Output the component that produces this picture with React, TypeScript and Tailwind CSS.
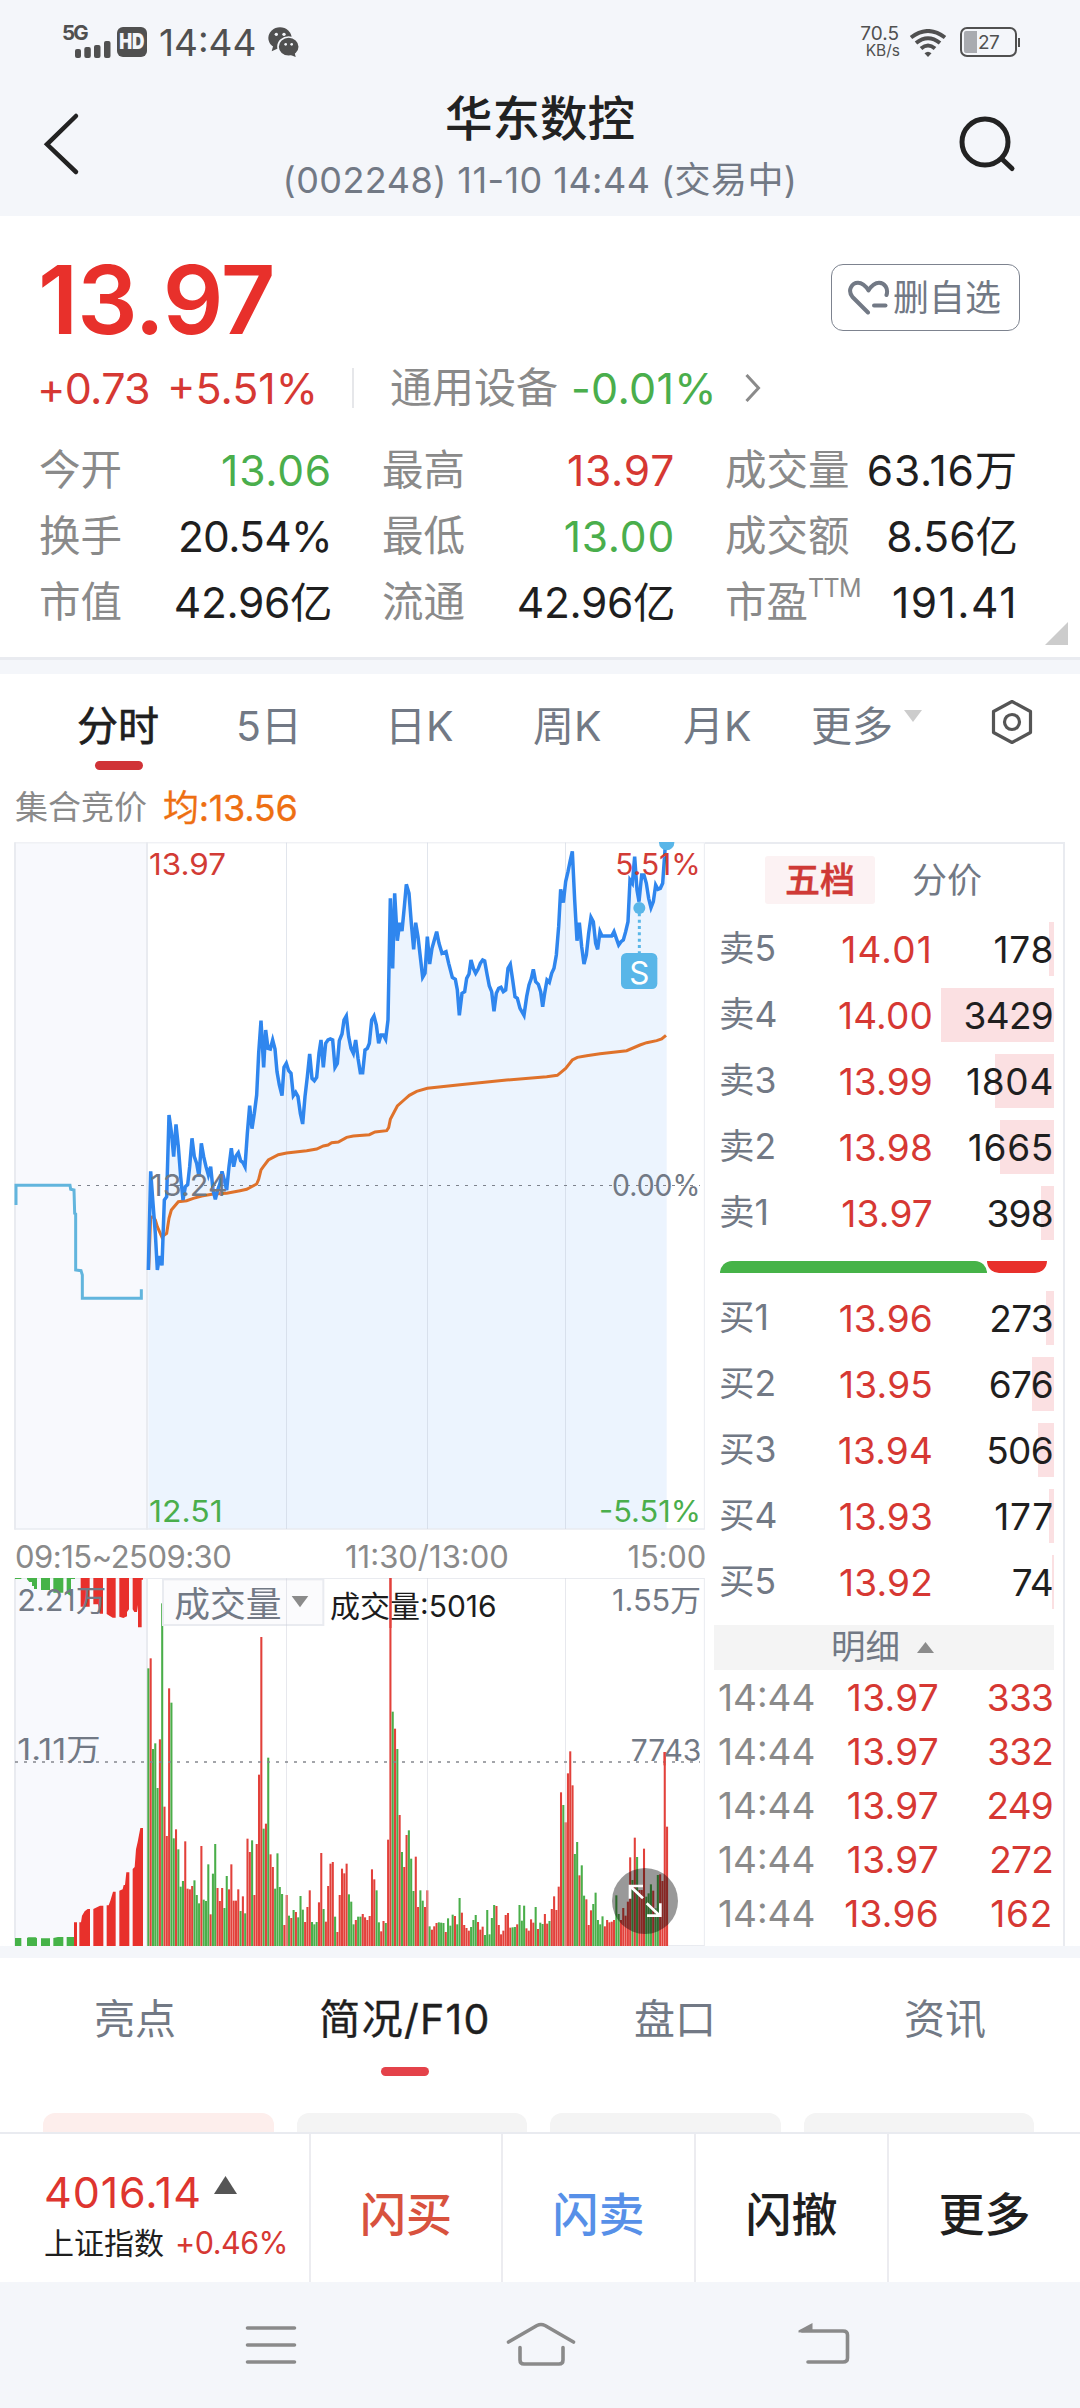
import React from "react";

// Plot coordinates below are in thirds of a CSS pixel.
const PRICE =
  "445,1320 452,1024 459,1120 466,1210 472,1320 479,1278 486,1306 493,1110 500,1100 507,855 514,905 521,980 528,883 535,950 542,1040 549,1110 556,1070 563,1064 569,1010 576,925 583,980 590,1000 597,1040 604,940 611,980 618,1010 625,1035 632,1010 639,1080 646,1108 653,1080 660,1060 666,1024 673,1050 680,1080 687,1010 694,955 701,1010 708,978 715,968 722,992 729,998 735,1010 742,910 749,827 756,896 763,850 770,795 776,670 783,572 791,712 797,600 804,655 811,657 818,630 825,657 831,725 838,765 846,797 852,712 859,700 866,722 873,730 880,797 887,787 894,800 901,850 908,882 915,800 922,740 929,672 936,745 943,752 950,742 957,670 963,630 970,712 977,640 984,630 991,627 998,630 1005,712 1012,700 1018,632 1026,612 1032,570 1039,558 1046,620 1053,655 1060,670 1067,630 1074,685 1081,728 1088,728 1095,660 1102,655 1108,640 1115,570 1122,558 1129,585 1136,640 1143,615 1150,615 1157,628 1164,570 1171,205 1178,415 1184,190 1192,332 1199,278 1206,303 1213,230 1219,163 1227,190 1234,280 1241,358 1247,278 1254,320 1262,390 1268,442 1275,430 1282,320 1289,402 1296,355 1303,330 1310,305 1317,340 1326,370 1338,365 1346,400 1357,442 1366,448 1372,480 1378,556 1386,490 1394,485 1400,445 1407,432 1413,390 1420,415 1427,430 1434,418 1441,400 1448,390 1454,393 1461,432 1468,468 1475,485 1482,544 1489,490 1496,475 1503,472 1510,485 1517,480 1524,415 1531,403 1538,450 1545,500 1552,505 1560,535 1572,556 1580,500 1587,465 1594,445 1600,418 1607,455 1615,463 1622,485 1628,530 1634,490 1641,450 1648,457 1655,430 1662,415 1669,375 1676,290 1682,178 1690,218 1697,155 1704,125 1711,90 1717,64 1724,210 1731,332 1738,278 1745,350 1752,402 1759,375 1766,310 1773,262 1780,275 1787,340 1793,358 1800,305 1806,318 1835,318 1842,305 1849,325 1856,345 1863,335 1870,330 1877,305 1884,275 1890,150 1897,160 1904,80 1911,180 1917,215 1925,135 1932,135 1939,160 1946,205 1953,233 1960,215 1967,165 1974,178 1981,175 1988,160 1995,60 2000,38";

const AVERAGE =
  "446,1320 452,1162 459,1160 466,1170 472,1190 486,1222 493,1215 500,1210 507,1165 514,1140 535,1115 560,1112 580,1105 605,1098 640,1092 680,1090 720,1082 740,1078 770,1062 776,1048 783,1020 790,1010 805,990 835,974 860,969 920,962 950,957 970,948 984,945 995,938 1015,936 1040,922 1060,918 1108,914 1125,906 1160,902 1166,893 1171,868 1192,828 1212,810 1228,796 1250,784 1282,775 1380,764 1520,750 1640,740 1672,736 1697,715 1717,690 1732,682 1760,677 1800,671 1880,662 1920,645 1940,638 1970,632 1985,627 1998,616";

const AUCTION =
  "48,1125 48,1066 210,1066 212,1078 222,1080 224,1150 227,1152 227,1320 243,1322 247,1335 247,1405 424,1405 424,1378";

// One entry per minute: r = up, g = down, followed by the top of the bar.
const VOLUME =
  "g565 r535 g807 g790 g924 r778 g370 r980 r1068 r625 g668 g1075 r1048 g1108 g1220 g1203 r1084 r1226 r1228 r1218 g1201 g1245 g1270 r1098 g1259 g1263 g1153 r1303 g1181 g1092 r1224 r1263 r1224 g1284 g1188 r1228 r1153 r1262 r1262 r1228 g1293 r1249 g1300 r1076 r1116 g1081 r1245 r1092 r884 r471 g1046 r1031 g833 r1123 r1161 g1226 g1120 g1221 g1242 r1335 r1245 g1307 r1314 g1290 r1296 g1312 g1248 g1289 r1326 r1281 r1231 g1326 g1333 g1326 r1267 r1119 g1287 r1325 r1218 r1151 r1146 g1310 r1356 r1245 r1166 r1180 r1151 g1243 g1265 g1333 r1320 g1310 g1310 r1302 r1312 r1320 r1308 r1168 r1198 g1231 g1327 r1354 r1323 g1329 r1079 r294 g695 r746 g807 r1005 g1116 r1161 r1065 g1051 g1136 g1233 r1130 r1281 g1231 g1262 r1281 r1231 g1339 r1349 r1339 r1329 g1327 g1328 g1329 r1356 g1315 g1337 g1304 r1308 g1333 g1254 r1298 r1335 r1344 r1352 g1341 g1320 g1305 r1326 r1349 r1340 g1365 g1290 g1363 g1314 g1275 r1278 r1335 r1363 r1352 r1305 r1299 r1343 g1342 g1341 r1333 g1275 g1322 g1277 r1345 r1352 r1318 r1328 g1281 r1347 g1328 g1332 r1302 r1331 g1323 r1287 r1249 r1290 r1220 r937 g975 r1027 r880 r814 r916 g1122 g1086 r1186 g1156 g1247 r1258 r1335 r1291 g1272 g1238 g1320 g1333 g1309 r1339 r1320 r1327 r1325 r1320 g1246 g1302 r1320 r1284 r1307 r1265 r1132 g1200 r1073 g1131 r1230 r1230 r1106 g1250 g1240 g1213 r1232 g1285 g1185 r1183 r1203 r816 r1040".split(" ");

const LINE = "#e9ebf0";
const GREEN = "#46b348";
const RED = "#e8302b";

type LabelProps = {
  x: number;
  y: number;
  w: number;
  size?: number;
  fill: string;
  children: string;
};

function Label({ x, y, w, size = 88, fill, children }: LabelProps) {
  return (
    <text x={x} y={y} fontSize={size} fill={fill} textLength={w} lengthAdjust="spacingAndGlyphs">
      {children}
    </text>
  );
}

function PriceChart() {
  return (
    <svg className="block h-[688px] w-[708px]" viewBox="0 36 2124 2064">
      <rect x="45" y="38" width="396" height="2059" fill="#f8f9fd" />
      <polygon points={`445,2097 ${PRICE} 2000,2097`} fill="#ecf4fe" />
      <g stroke={LINE} fill="none">
        <path d="M45 38.500H2113" strokeWidth="3" />
        <path d="M45 2097H2113" strokeWidth="5" />
        <path d="M45 37V2099M441 37V2099" strokeWidth="6" />
        <path d="M2113 37V2099" strokeWidth="3" />
      </g>
      <path d="M859.500 38V2097M1282.500 38V2097M1696.500 38V2097" stroke="#c9d0dc" strokeOpacity="0.55" strokeWidth="3" />
      <path d="M234 1066.500H2100" stroke="#7d828c" strokeWidth="3" strokeDasharray="9 18" />
      <Label x={1836} y={1098} w={265} fill="#727985">0.00%</Label>
      <polyline points={AUCTION} fill="none" stroke="#62b5dd" strokeWidth="9" />
      <polyline points={AVERAGE} fill="none" stroke="#df722b" strokeWidth="9" />
      <polyline points={PRICE} fill="none" stroke="#2f86ee" strokeWidth="10.500" />
      <Label x={451} y={1098} w={232} fill="#727985">13.24</Label>
      <circle cx="2000" cy="38" r="23" fill="#59b6e8" />
      <Label x={447} y={135} w={231} fill="#d23b35">13.97</Label>
      <Label x={1846} y={135} w={256} fill="#d23b35">5.51%</Label>
      <Label x={447} y={2076} w={221} fill="#4aae4c">12.51</Label>
      <Label x={1797} y={2076} w={306} fill="#4aae4c">-5.51%</Label>
      <path d="M1918 250V370" stroke="#59b6e8" strokeWidth="9" strokeDasharray="9 10" />
      <circle cx="1918" cy="234" r="18" fill="#59b6e8" />
      <rect x="1863" y="369" width="109" height="108" rx="16" fill="#59b6e8" />
      <text x="1918" y="462" fontSize="94" fill="#fff" textAnchor="middle">S</text>
    </svg>
  );
}

function VolumeChart() {
  return (
    <svg className="block h-[368px] w-[708px]" viewBox="0 294 2124 1104">
      <rect x="45" y="294" width="396" height="1104" fill="#f8f9fd" />
      <g stroke={LINE} fill="none">
        <path d="M45 295.500H2113M2113 294V1398M1999 1396.500H2113" strokeWidth="3" />
        <path d="M45 294V1398M441 294V1398" strokeWidth="6" />
      </g>
      <path
        fill={GREEN}
        d="M45 294h19v3h-19zM81 294h30v33h-9v-9h-6v-12h-8l-7-8zM123 294h27v36h-27zM160 294h30v44h-30zM200 294h25v3h-12v52l-13-9zM45 1374h19v24h-19zM81 1374l4-2h22l4 3v23h-30zM123 1375h27v23h-27zM160 1374l14-3h16v27h-30zM200 1371h22v27h-22z"
      />
      <path
        fill={RED}
        d="M242 294h27v86h-27zM280 294h29v107h-10l-5-28h-14zM320 294h27v119h-9l-18-11zM358 294h29v94l-6 8v13l-11 5l-12-4zM398 294h31v5h-4v143h-11v-67l-3 21h-8l-5-8zM222 1327h9v71h-9zM238 1327h5l3-20 8-13 9-7h7v111h-32zM280 1287l20-10h10v121h-30zM320 1276h6l5-14 8-27h8v163h-27zM358 1232l10-4 3-13h4l4-38h9v221h-30zM398 1167l6-6 4-53 5-22 8-42h8v354h-31z"
      />
      {VOLUME.map((bar, i) => {
        const top = Number(bar.slice(1));
        return (
          <rect
            key={i}
            x={442 + i * 6.916}
            y={top}
            width="6.200"
            height={1398 - top}
            fill={bar[0] === "r" ? "#e2413b" : "#4aae4a"}
          />
        );
      })}
      <rect x="489" y="298" width="481" height="137" fill="#fbfbfd" stroke={LINE} strokeWidth="6" />
      <path d="M859.500 295V1398M1282.500 295V1398M1696.500 295V1398" stroke="#c9cdd6" strokeOpacity="0.45" strokeWidth="3" />
      <path d="M45 846H2100" stroke="#85888e" strokeWidth="5" strokeDasharray="9 18" />
      <Label x={523} y={411} w={322} size={106} fill="#727985">成交量</Label>
      <path d="M875 348h50l-25 34z" fill="#8b8b8b" />
      <Label x={990} y={410} w={500} size={90} fill="#1c1c1c">成交量:5016</Label>
      <rect x="1168.500" y="294" width="6" height="150" fill="#e2413b" />
      <Label x={52} y={393} w={267} fill="#727985">2.21万</Label>
      <Label x={52} y={840} w={250} fill="#727985">1.11万</Label>
      <Label x={1836} y={394} w={267} fill="#727985">1.55万</Label>
      <Label x={1892} y={842} w={212} fill="#727985">7743</Label>
      <rect x="1990.500" y="816" width="6" height="40" fill="#e2413b" />
      <circle cx="1935" cy="1263" r="99" fill="#000" fillOpacity="0.4" />
      <path
        d="M1929 1255L1893 1221M1890 1256V1218H1929M1940 1270L1978 1306M1981 1270V1307H1941"
        fill="none"
        stroke="#fff"
        strokeWidth="8"
      />
    </svg>
  );
}

function StatusBar() {
  return (
    <div className="flex h-[84px] items-center pr-[60px] pl-[62px] text-[#505050]">
      <div className="flex h-[32px] w-[49px] flex-col">
        <span className="h-[14px] text-[20.500px] leading-[14px] font-bold tracking-[-1.800px]">5G</span>
        <svg className="mt-[1px] ml-[13px] h-[17px] w-[36px]" viewBox="0 0 36 17" fill="currentColor">
          <rect x="0" y="8" width="6" height="9" rx="2" />
          <rect x="9.300" y="6" width="6.500" height="11" rx="2" />
          <rect x="19" y="4" width="6.500" height="13" rx="2" />
          <rect x="29" y="0" width="6.500" height="17" rx="2" />
        </svg>
      </div>
      <div className="ml-[6px] flex h-[30px] w-[30px] items-center justify-center rounded-[6px] bg-[#505050]">
        <span className="scale-x-[0.800] text-[21.500px] leading-none font-black text-[#f4f6fa]">HD</span>
      </div>
      <span className="ml-[12px] w-[98px] text-[37px] leading-none">14:44</span>
      <svg className="ml-[11px] h-[30px] w-[31px]" viewBox="686 50 93 90" fill="currentColor">
        <ellipse cx="722" cy="83" rx="35" ry="32" />
        <path d="M702 105l-5 18 22-10z" />
        <ellipse cx="748" cy="109" rx="32" ry="29" stroke="#f4f6fa" strokeWidth="5" />
        <path d="M752 133l17 7-4-17z" />
        <g fill="#f4f6fa">
          <circle cx="711" cy="72" r="5" />
          <circle cx="734" cy="72" r="5" />
          <circle cx="739" cy="102" r="4" />
          <circle cx="757" cy="102" r="4" />
        </g>
      </svg>
      <div className="ml-auto flex w-[42px] flex-col items-end">
        <span className="mr-[1px] text-[19px] leading-[18px]">70.5</span>
        <span className="text-[15.500px] leading-[16px]">KB/s</span>
      </div>
      <svg className="mt-[2px] ml-[9px] h-[28px] w-[38px]" viewBox="0 0 38 28" fill="none" stroke="currentColor" strokeWidth="4">
        <path d="M2 8.500Q19 -4.500 36 8.500" />
        <path d="M7 14Q19 4.500 31 14" />
        <path d="M12 19.500Q19 13.500 26 19.500" />
        <path d="M15.500 24.300Q19 21 22.500 24.300L19 28z" fill="currentColor" stroke="none" />
      </svg>
      <div className="ml-[13px] flex h-[30px] w-[57px] items-center rounded-[7px] border-[2.500px] border-[#505050] p-[2px]">
        <div className="h-[22px] w-[13px] rounded-l-[2px] bg-[#a9abb0]" />
        <span className="ml-[1px] text-[19px] leading-none tracking-[-0.500px]">27</span>
      </div>
      <div className="ml-[1px] h-[9px] w-[2px] bg-[#505050]" />
    </div>
  );
}

function Header() {
  return (
    <div className="flex h-[132px] justify-between pr-[60px] pl-[40px] text-[#222]">
      <svg className="mt-[24px] h-[72px] w-[50px]" viewBox="40 108 50 72" fill="none" stroke="currentColor" strokeWidth="4.500" strokeLinecap="round">
        <path d="M76 116L47 144.300L76 172" />
      </svg>
      <div className="flex w-[560px] flex-col items-center pl-[32px]">
        <div className="flex h-[70px] items-center text-[47.500px] leading-none font-medium">华东数控</div>
        <div className="flex h-[52px] items-center text-[36px] leading-none tracking-[0.450px] whitespace-nowrap text-[#727985]">
          (002248) 11-10 14:44 (交易中)
        </div>
      </div>
      <svg className="mt-[28px] h-[66px] w-[62px]" viewBox="958 112 62 66" fill="none" stroke="currentColor" strokeWidth="5" strokeLinecap="round">
        <circle cx="985" cy="142" r="23" />
        <path d="M1002 159L1012 168.500" />
      </svg>
    </div>
  );
}

type Stat = { label: string; sup?: string; value: string; tone: string };

const STATS: Stat[] = [
  { label: "今开", value: "13.06", tone: "tracking-[0.800px] text-[#4aae4c]" },
  { label: "最高", value: "13.97", tone: "tracking-[0.800px] text-[#d63833]" },
  { label: "成交量", value: "63.16万", tone: "tracking-[0.800px] text-[#1f1f1f]" },
  { label: "换手", value: "20.54%", tone: "tracking-[-0.700px] text-[#1f1f1f]" },
  { label: "最低", value: "13.00", tone: "tracking-[0.800px] text-[#4aae4c]" },
  { label: "成交额", value: "8.56亿", tone: "tracking-[0px] text-[#1f1f1f]" },
  { label: "市值", value: "42.96亿", tone: "tracking-[-0.400px] text-[#1f1f1f]" },
  { label: "流通", value: "42.96亿", tone: "tracking-[-0.400px] text-[#1f1f1f]" },
  { label: "市盈", sup: "TTM", value: "191.41", tone: "tracking-[1.500px] text-[#1f1f1f]" },
];

function Quote() {
  return (
    <section className="relative h-[441px] bg-white pt-[48px]">
      <div className="flex h-[70px] items-center justify-between pr-[60px] pl-[38px]">
        <span className="text-[95px] leading-none font-semibold tracking-[-1px] text-[#e8302b]">13.97</span>
        <div className="flex h-[67px] w-[189px] items-center self-start rounded-[12px] border-[1.500px] border-[#7d838f] pl-[16px] text-[#727985]">
          <svg className="h-[36px] w-[42px]" viewBox="0 0 42 36" fill="none" stroke="currentColor" strokeWidth="4" strokeLinecap="round" strokeLinejoin="round">
            <path d="M20 32.500L4.500 17C-1 10 4 2.800 10 2.800C15 2.800 18 6.500 20.500 10.500C23 6.500 26 2.800 31 2.800C37 2.800 40.500 9 38.500 15" />
            <path d="M26 25.500H37.500" />
          </svg>
          <span className="ml-[3px] text-[36px] leading-none">删自选</span>
        </div>
      </div>
      <div className="mt-[27px] flex h-[54px] items-center pl-[37px] text-[43px] leading-none tracking-[-0.700px]">
        <span className="w-[130px] text-[#d63833]">+0.73</span>
        <span className="w-[185px] tracking-[0px] text-[#d63833]">+5.51%</span>
        <span className="h-[40px] w-[2px] bg-[#e6e7ea]" />
        <span className="ml-[36px] w-[181px] text-[42px] tracking-normal text-[#8a8a8a]">通用设备</span>
        <span className="w-[174px] tracking-[0.300px] text-[#4aae4c]">-0.01%</span>
        <svg className="h-[28px] w-[16px]" viewBox="0 0 16 28" fill="none" stroke="#8a8a8a" strokeWidth="3">
          <path d="M1.500 1L13.500 14L1.500 27" />
        </svg>
      </div>
      <div className="mt-[23px] grid grid-cols-[293px_293px_293px] gap-x-[50px] pl-[39px]">
        {STATS.map((s) => (
          <div key={s.label} className="flex h-[66px] items-center justify-between leading-none whitespace-nowrap">
            <span className="flex text-[41.500px] text-[#8a8a8a]">
              {s.label}
              {s.sup && <span className="mt-[-6px] text-[25px] leading-none tracking-[-0.700px]">{s.sup}</span>}
            </span>
            <span className={`text-[42.500px] ${s.tone}`}>{s.value}</span>
          </div>
        ))}
      </div>
      <svg className="absolute right-[12px] bottom-[12px] h-[23px] w-[23px]" viewBox="0 0 23 23">
        <path d="M23 0V23H0z" fill="#ccc" />
      </svg>
    </section>
  );
}

function ChartTabs() {
  return (
    <div className="flex h-[104px] items-center pl-[77px] text-[41px] leading-none whitespace-nowrap text-[#727985]">
      <span className="relative flex h-full w-[81px] items-center text-[#1f1f1f] [-webkit-text-stroke:0.700px_#1f1f1f]">
        分时
        <span className="absolute bottom-[8px] left-[18px] h-[9px] w-[48px] rounded-full bg-[#d03337]" />
      </span>
      <span className="ml-[78px] w-[64px]">5日</span>
      <span className="ml-[85px] w-[66px]">日K</span>
      <span className="ml-[82px] w-[68px]">周K</span>
      <span className="ml-[82px] w-[67px]">月K</span>
      <span className="ml-[61px] w-[80px]">更多</span>
      <svg className="mt-[-20px] ml-[13px] h-[12px] w-[18px]" viewBox="0 0 18 12">
        <path d="M0 0H18L9 12z" fill="#ccc" />
      </svg>
      <svg className="mt-[-8px] ml-[69px] h-[46px] w-[42px]" viewBox="0 0 42 46" fill="none" stroke="#555" strokeWidth="3.200" strokeLinejoin="round">
        <path d="M21 2.500L39.500 12.500V33.500L21 43.500L2.500 33.500V12.500z" />
        <circle cx="21" cy="23" r="7.500" />
      </svg>
    </div>
  );
}

type Level = { name: string; price: string; qty: string; bar: string; wide?: boolean; wideQty?: boolean };

const ASKS: Level[] = [
  { name: "卖5", price: "14.01", qty: "178", bar: "w-[5px]", wide: true, wideQty: true },
  { name: "卖4", price: "14.00", qty: "3429", bar: "w-[113px]" },
  { name: "卖3", price: "13.99", qty: "1804", bar: "w-[59px]", wideQty: true },
  { name: "卖2", price: "13.98", qty: "1665", bar: "w-[54px]", wideQty: true },
  { name: "卖1", price: "13.97", qty: "398", bar: "w-[13px]" },
];

const BIDS: Level[] = [
  { name: "买1", price: "13.96", qty: "273", bar: "w-[8px]" },
  { name: "买2", price: "13.95", qty: "676", bar: "w-[22px]" },
  { name: "买3", price: "13.94", qty: "506", bar: "w-[16px]" },
  { name: "买4", price: "13.93", qty: "177", bar: "w-[5px]", wideQty: true },
  { name: "买5", price: "13.92", qty: "74", bar: "w-[2px]" },
];

const TRADES = [
  ["14:44", "13.97", "333"],
  ["14:44", "13.97", "332"],
  ["14:44", "13.97", "249"],
  ["14:44", "13.97", "272"],
  ["14:44", "13.96", "162"],
];

function LevelRow({ name, price, qty, bar, wide, wideQty }: Level) {
  return (
    <div className="flex h-[66px] items-center pr-[9px] pl-[14px] text-[37px] leading-none">
      <span className="w-[90px] text-[35.500px] text-[#727985]">{name}</span>
      <span className={`w-[124px] text-right text-[#d63833] ${wide ? "tracking-[1.200px]" : "tracking-[0.200px]"}`}>{price}</span>
      <span className="relative ml-auto flex h-[54px] w-[114px] items-center justify-end">
        <span className={`absolute top-0 right-0 h-[54px] bg-[#fbe0e2] ${bar}`} />
        <span className={`relative text-[#1f1f1f] ${wideQty ? "tracking-[0.700px]" : "mr-[1px] tracking-[-0.700px]"}`}>{qty}</span>
      </span>
    </div>
  );
}

function OrderBook() {
  return (
    <div className="ml-[-3px] h-[1104px] w-[360px] border-t-2 border-r-2 border-[#e9ebf0] pt-[12px]">
      <div className="flex h-[48px] items-center pl-[60px] text-[35px] leading-none">
        <span className="flex h-[48px] w-[110px] items-center justify-center rounded-[3px] bg-[#fcf2f3] font-medium text-[#cf3a36] [-webkit-text-stroke:0.500px_#cf3a36]">五档</span>
        <span className="ml-[37px] text-[#727985]">分价</span>
      </div>
      <div className="mt-[12px]">
        {ASKS.map((l) => (
          <LevelRow key={l.name} {...l} />
        ))}
      </div>
      <div className="mt-[15px] flex h-[12px] pl-[15px]">
        <div className="w-[267px] rounded-t-[12px] bg-[#46b348]" />
        <div className="w-[60px] rounded-b-[12px] bg-[#e8302b]" />
      </div>
      <div className="mt-[12px]">
        {BIDS.map((l) => (
          <LevelRow key={l.name} {...l} />
        ))}
      </div>
      <div className="mt-[10px] ml-[9px] flex h-[45px] w-[340px] items-center bg-[#f4f4f4] pl-[117px] text-[34.500px] leading-none text-[#727985]">
        明细
        <svg className="ml-[17px] h-[11px] w-[17px]" viewBox="0 0 17 11">
          <path d="M0 11L8.500 0L17 11z" fill="#8b8b8b" />
        </svg>
      </div>
      {TRADES.map(([time, price, qty], i) => (
        <div key={i} className="flex h-[54px] items-center pr-[10px] pl-[13px] text-[37px] leading-none text-[#d63833]">
          <span className="w-[100px] text-[#8a8a8a]">{time}</span>
          <span className="w-[121px] text-right tracking-[0.300px]">{price}</span>
          <span className={qty.startsWith("1") ? "ml-auto tracking-[0.700px]" : "ml-auto tracking-[-0.800px]"}>{qty}</span>
        </div>
      ))}
    </div>
  );
}

function ChartSection() {
  return (
    <section className="bg-white">
      <ChartTabs />
      <div className="flex h-[64px] items-center pb-[5px] pl-[15px] leading-none">
        <span className="w-[148px] text-[33px] text-[#8a8a8a]">集合竞价</span>
        <span className="text-[36px] tracking-[-0.300px] text-[#ee6f12] [-webkit-text-stroke:0.300px_#ee6f12]">均:13.56</span>
      </div>
      <div className="flex">
        <div className="w-[708px]">
          <PriceChart />
          <div className="flex h-[48px] items-center pt-[4px] pr-[2px] pl-[15px] text-[31px] leading-none text-[#8a8a8a]">
            <span className="w-[330px] tracking-[-0.500px]">09:15~2509:30</span>
            <span>11:30/13:00</span>
            <span className="ml-auto tracking-[-0.200px]">15:00</span>
          </div>
          <VolumeChart />
        </div>
        <OrderBook />
      </div>
    </section>
  );
}

function InfoTabs() {
  return (
    <section className="bg-white">
      <div className="grid h-[122px] grid-cols-4 text-[41px] leading-none text-[#727985]">
        <span className="flex items-center justify-center">亮点</span>
        <span className="relative flex items-center justify-center tracking-[1.300px] text-[#1f1f1f] [-webkit-text-stroke:0.400px_#1f1f1f]">
          简况/F10
          <span className="absolute bottom-[4px] left-[111px] h-[9px] w-[48px] rounded-full bg-[#e4424a]" />
        </span>
        <span className="flex items-center justify-center">盘口</span>
        <span className="flex items-center justify-center">资讯</span>
      </div>
      <div className="mt-[33px] grid h-[19px] grid-cols-4 gap-x-[23px] pr-[46px] pl-[43px]">
        <div className="rounded-t-[12px] bg-[#fdeeec]" />
        <div className="rounded-t-[12px] bg-[#f4f4f4]" />
        <div className="rounded-t-[12px] bg-[#f4f4f4]" />
        <div className="rounded-t-[12px] bg-[#f4f4f4]" />
      </div>
    </section>
  );
}

function ActionBar() {
  return (
    <div className="flex h-[150px] border-t-2 border-[#e9ebf0] bg-white text-[46px] leading-none font-medium text-[#1f1f1f]">
      <div className="flex w-[309px] flex-col pt-[36px] pl-[44px] font-normal">
        <div className="flex h-[44px] items-center text-[43px] tracking-[0.900px] text-[#de352f]">
          <span className="w-[170px]">4016.14</span>
          <svg className="mt-[-14px] h-[18px] w-[23px]" viewBox="0 0 23 18">
            <path d="M0 18L11.500 0L23 18z" fill="#555" />
          </svg>
        </div>
        <div className="mt-[12px] flex h-[34px] items-center">
          <span className="w-[131px] text-[30px]">上证指数</span>
          <span className="text-[30.500px] tracking-[-0.500px] text-[#d63833]">+0.46%</span>
        </div>
      </div>
      <div className="flex w-[192px] items-center justify-center border-l-2 border-[#ececf0] pt-[11px] text-[#d8523e]">闪买</div>
      <div className="flex w-[193px] items-center justify-center border-l-2 border-[#ececf0] pt-[11px] text-[#5790e8]">闪卖</div>
      <div className="flex w-[193px] items-center justify-center border-l-2 border-[#ececf0] pt-[11px]">闪撤</div>
      <div className="flex w-[193px] items-center justify-center border-l-2 border-[#ececf0] pt-[11px]">更多</div>
    </div>
  );
}

function SystemNav() {
  return (
    <div className="flex h-[126px] pt-[38px] pl-[244px] text-[#8a8a8a]">
      <svg className="h-[48px] w-[54px]" viewBox="244 2320 54 48" fill="none" stroke="currentColor" strokeWidth="3.600" strokeLinecap="round">
        <path d="M247.500 2328H294.500M247.500 2345H294.500M247.500 2362H294.500" />
      </svg>
      <svg className="ml-[208px] h-[50px] w-[72px]" viewBox="506 2320 72 50" fill="none" stroke="currentColor" strokeWidth="3.600" strokeLinecap="round" strokeLinejoin="round">
        <path d="M508.500 2342L537 2325.500Q541 2323.500 545 2325.500L573.500 2342" />
        <path d="M520 2347.500V2360Q520 2364 524 2364H559Q563 2364 563 2360V2347.500" />
      </svg>
      <svg className="ml-[218px] h-[48px] w-[56px]" viewBox="796 2320 56 48" fill="none" stroke="currentColor" strokeWidth="3.600" strokeLinecap="round">
        <path d="M802 2331H843Q847.500 2331 847.500 2335V2358Q847.500 2362 843 2362H808" />
        <path d="M812.500 2323V2331.500L798.500 2332.500V2330.500z" fill="currentColor" stroke="none" />
      </svg>
    </div>
  );
}

export default function App() {
  return (
    <div className="h-[2408px] w-[1080px] overflow-hidden bg-[#f4f6fa] font-['Inter','Noto_Sans_CJK_SC',sans-serif]">
      <StatusBar />
      <Header />
      <Quote />
      <div className="h-[17px] border-t-[3px] border-[#e9ebf0]" />
      <ChartSection />
      <div className="h-[12px]" />
      <InfoTabs />
      <ActionBar />
      <SystemNav />
    </div>
  );
}
